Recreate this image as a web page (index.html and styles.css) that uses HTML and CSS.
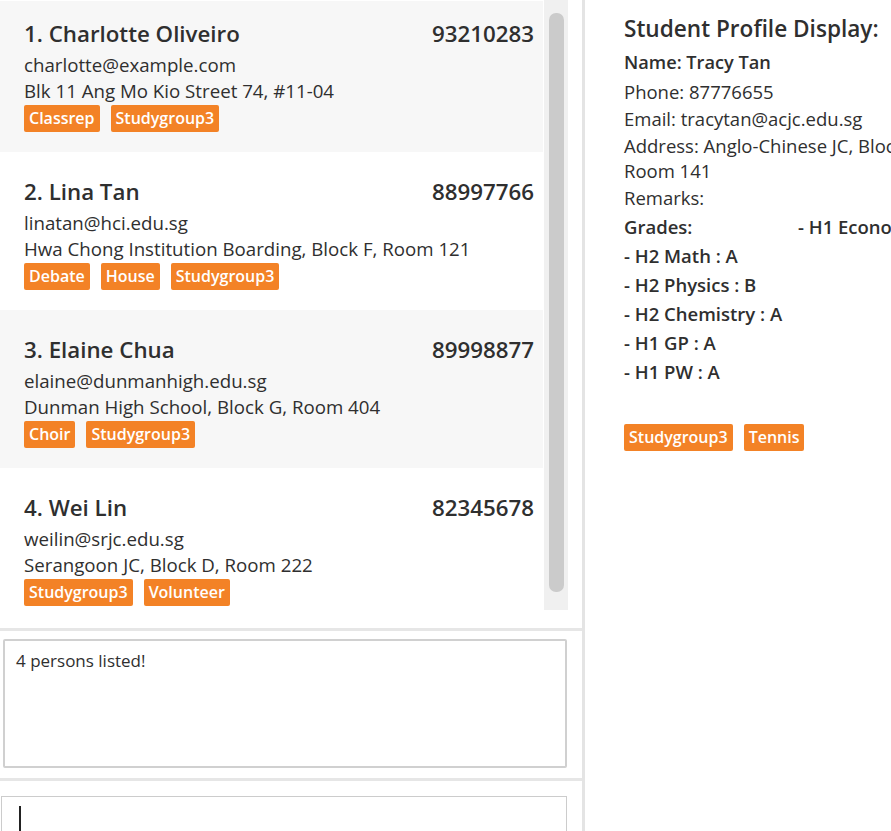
FILE: index.html
```html
<!DOCTYPE html>
<html>
<head>
<meta charset="utf-8">
<link rel="stylesheet" href="styles.css">
</head>
<body>
<div class="app">
  <div class="left">
    <div class="list-pane">
      <div class="list-viewport">
        <div class="list">
          <div class="card alt">
            <div class="card-head"><span class="name">1. Charlotte Oliveiro</span><span class="phone">93210283</span></div>
            <div class="line email">charlotte@example.com</div>
            <div class="line">Blk 11 Ang Mo Kio Street 74, #11-04</div>
            <div class="tags"><span class="tag">Classrep</span><span class="tag">Studygroup3</span></div>
          </div>
          <div class="card">
            <div class="card-head"><span class="name">2. Lina Tan</span><span class="phone">88997766</span></div>
            <div class="line email">linatan@hci.edu.sg</div>
            <div class="line">Hwa Chong Institution Boarding, Block F, Room 121</div>
            <div class="tags"><span class="tag">Debate</span><span class="tag">House</span><span class="tag">Studygroup3</span></div>
          </div>
          <div class="card alt">
            <div class="card-head"><span class="name">3. Elaine Chua</span><span class="phone">89998877</span></div>
            <div class="line email">elaine@dunmanhigh.edu.sg</div>
            <div class="line">Dunman High School, Block G, Room 404</div>
            <div class="tags"><span class="tag">Choir</span><span class="tag">Studygroup3</span></div>
          </div>
          <div class="card">
            <div class="card-head"><span class="name">4. Wei Lin</span><span class="phone">82345678</span></div>
            <div class="line email">weilin@srjc.edu.sg</div>
            <div class="line">Serangoon JC, Block D, Room 222</div>
            <div class="tags"><span class="tag">Studygroup3</span><span class="tag">Volunteer</span></div>
          </div>
        </div>
      </div>
      <div class="scroll-track"><div class="scroll-thumb"></div></div>
    </div>
    <div class="hdivider"></div>
    <div class="result-pane">
      <div class="result-box">4 persons listed!</div>
    </div>
    <div class="hdivider"></div>
    <div class="command-pane">
      <div class="command-box"><span class="caret"></span></div>
    </div>
  </div>
  <div class="vdivider"></div>
  <div class="right">
    <div class="profile">
      <div class="p-title">Student Profile Display:</div>
      <div class="p-name">Name: Tracy Tan</div>
      <div class="p-line">Phone: 87776655</div>
      <div class="p-line">Email: tracytan@acjc.edu.sg</div>
      <div class="p-line">Address: Anglo-Chinese JC, Block B,<br>Room 141</div>
      <div class="p-line p-remarks">Remarks:</div>
      <div class="p-grades-head"><span class="p-grades-label">Grades:</span><span>- H1 Economics : A</span></div>
      <div class="p-grade">- H2 Math : A</div>
      <div class="p-grade">- H2 Physics : B</div>
      <div class="p-grade">- H2 Chemistry : A</div>
      <div class="p-grade">- H1 GP : A</div>
      <div class="p-grade">- H1 PW : A</div>
      <div class="tags p-tags"><span class="tag">Studygroup3</span><span class="tag">Tennis</span></div>
    </div>
  </div>
</div>
</body>
</html>
```

FILE: styles.css
```css
html, body {
  margin: 0;
  padding: 0;
  background: #ffffff;
  overflow: hidden;
}

body {
  font-family: "Open Sans", "Noto Sans", sans-serif;
  color: #2f2f2f;
}

.app {
  display: flex;
  width: 891px;
  height: 831px;
  overflow: hidden;
}

.left {
  width: 582px;
  flex: none;
  display: flex;
  flex-direction: column;
}

.vdivider {
  width: 3px;
  flex: none;
  background: #e4e4e4;
}

.right {
  flex: 1;
  min-width: 0;
  overflow: hidden;
  padding: 13px 0 0 39px;
}

/* list */
.list-pane {
  height: 628px;
  flex: none;
  display: flex;
}

.list-viewport {
  width: 543px;
  height: 626px;
  margin-top: 1px;
  overflow: hidden;
}

.list {
  margin-top: -7px;
}

.card {
  height: 158px;
  box-sizing: border-box;
  padding: 24px 9px 0 24px;
  background: #ffffff;
}

.card.alt {
  background: #f7f7f7;
}

.card-head {
  display: flex;
  justify-content: space-between;
  align-items: center;
  height: 30px;
  font-size: 22.3px;
}

.name {
  font-weight: 600;
}

.phone {
  font-weight: 600;
}

.line {
  font-size: 18.7px;
  line-height: 26px;
  white-space: nowrap;
}

.line.email {
  margin-top: 4px;
}

.tags {
  display: flex;
  gap: 11px;
  margin-top: 1px;
}

.tag {
  background: #f38226;
  color: #ffffff;
  font-weight: 600;
  font-size: 16px;
  height: 27px;
  line-height: 27px;
  padding: 0 5px;
  border-radius: 2px;
  white-space: nowrap;
}

.scroll-track {
  width: 24px;
  height: 610px;
  margin-left: 1px;
  background: #f0f0f0;
  box-sizing: border-box;
  padding: 13px 4px 0 5px;
}

.scroll-thumb {
  height: 579px;
  background: #cbcbcb;
  border-radius: 7px;
}

.hdivider {
  height: 3px;
  flex: none;
  background: #e6e6e6;
}

/* result */
.result-pane {
  height: 147px;
  flex: none;
  box-sizing: border-box;
  padding: 8px 15px 10px 3px;
}

.result-box {
  height: 100%;
  box-sizing: border-box;
  border: 2px solid #d0d0d0;
  border-radius: 2px;
  padding: 8px 11px;
  font-size: 17px;
  line-height: 24px;
}

/* command */
.command-pane {
  flex: 1;
  box-sizing: border-box;
  padding: 15px 15px 0 1px;
}

.command-box {
  height: 60px;
  box-sizing: border-box;
  border: 1.5px solid #cccccc;
  border-bottom: none;
  padding: 9px 0 0 17px;
}

.caret {
  display: block;
  width: 1.5px;
  height: 26px;
  background: #222222;
}

/* profile */
.profile {
  width: 420px;
}

.p-title {
  font-size: 22.6px;
  font-weight: 600;
  line-height: 32px;
  margin-bottom: 4px;
}

.p-name {
  font-size: 18.2px;
  font-weight: 600;
  line-height: 26px;
  margin-bottom: 4px;
}

.p-line {
  font-size: 18.5px;
  line-height: 25px;
  margin-bottom: 2px;
  white-space: nowrap;
}

.p-line.p-remarks {
  margin-bottom: 3px;
}

.p-grades-head {
  display: flex;
  font-size: 18.5px;
  font-weight: 600;
  line-height: 27px;
  margin-bottom: 2px;
  white-space: nowrap;
}

.p-grades-label {
  width: 174px;
  flex: none;
}

.p-grade {
  font-size: 18.5px;
  font-weight: 600;
  line-height: 27px;
  margin-bottom: 2px;
}

.p-tags {
  margin-top: 39px;
}
```
